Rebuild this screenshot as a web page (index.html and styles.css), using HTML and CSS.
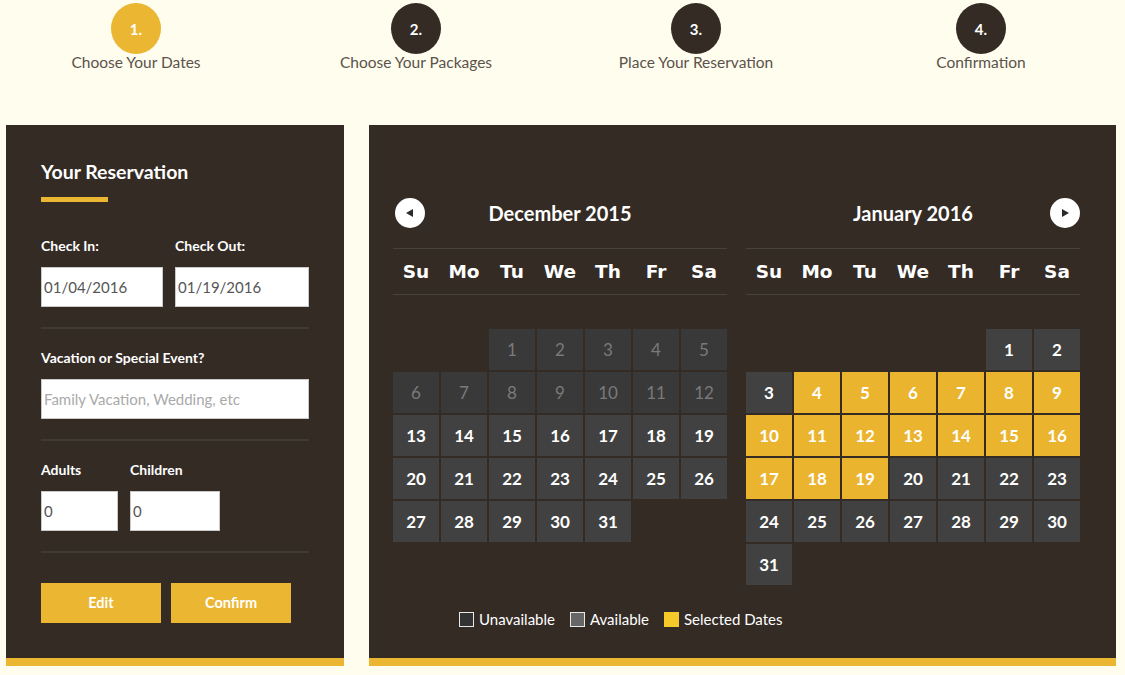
FILE: index.html
```html
<!DOCTYPE html>
<html>
<head>
<meta charset="utf-8">
<title>Reservation</title>
<link rel="stylesheet" href="styles.css">
</head>
<body>
<div class="steps">
  <div class="step active"><div class="num">1.</div><div class="label">Choose Your Dates</div></div>
  <div class="step"><div class="num">2.</div><div class="label">Choose Your Packages</div></div>
  <div class="step"><div class="num">3.</div><div class="label">Place Your Reservation</div></div>
  <div class="step"><div class="num">4.</div><div class="label">Confirmation</div></div>
</div>
<div class="main">
  <div class="panel side">
    <h2 class="title">Your Reservation</h2>
    <div class="bar"></div>
    <div class="row dates">
      <div class="field f-in"><label>Check In:</label><input type="text" value="01/04/2016"></div>
      <div class="field f-out"><label>Check Out:</label><input type="text" value="01/19/2016"></div>
    </div>
    <div class="sep"></div>
    <div class="field"><label>Vacation or Special Event?</label><input type="text" placeholder="Family Vacation, Wedding, etc"></div>
    <div class="sep"></div>
    <div class="row guests">
      <div class="field f-adults"><label>Adults</label><input type="text" value="0"></div>
      <div class="field f-children"><label>Children</label><input type="text" value="0"></div>
    </div>
    <div class="sep"></div>
    <div class="buttons">
      <button class="btn">Edit</button>
      <button class="btn">Confirm</button>
    </div>
  </div>
  <div class="panel cal">
    <div class="months">
      <div class="month">
        <div class="mhead">
          <span class="arrow"><svg width="30" height="30" viewBox="0 0 30 30"><path d="M11 15 L18 11 L18 19 Z" fill="#2b2b2b"/></svg></span>
          <span class="mtitle">December 2015</span>
          <span class="arrow-spacer"></span>
        </div>
        <div class="wdays"><span>Su</span><span>Mo</span><span>Tu</span><span>We</span><span>Th</span><span>Fr</span><span>Sa</span></div>
        <div class="grid">
          <span class="blank"></span><span class="blank"></span>
          <span class="un">1</span><span class="un">2</span><span class="un">3</span><span class="un">4</span><span class="un">5</span>
          <span class="un">6</span><span class="un">7</span><span class="un">8</span><span class="un">9</span><span class="un">10</span><span class="un">11</span><span class="un">12</span>
          <span>13</span><span>14</span><span>15</span><span>16</span><span>17</span><span>18</span><span>19</span>
          <span>20</span><span>21</span><span>22</span><span>23</span><span>24</span><span>25</span><span>26</span>
          <span>27</span><span>28</span><span>29</span><span>30</span><span>31</span>
        </div>
      </div>
      <div class="month">
        <div class="mhead">
          <span class="arrow-spacer"></span>
          <span class="mtitle">January 2016</span>
          <span class="arrow"><svg width="30" height="30" viewBox="0 0 30 30"><path d="M19 15 L12 11 L12 19 Z" fill="#2b2b2b"/></svg></span>
        </div>
        <div class="wdays"><span>Su</span><span>Mo</span><span>Tu</span><span>We</span><span>Th</span><span>Fr</span><span>Sa</span></div>
        <div class="grid">
          <span class="blank"></span><span class="blank"></span><span class="blank"></span><span class="blank"></span><span class="blank"></span>
          <span>1</span><span>2</span>
          <span>3</span><span class="sel">4</span><span class="sel">5</span><span class="sel">6</span><span class="sel">7</span><span class="sel">8</span><span class="sel">9</span>
          <span class="sel">10</span><span class="sel">11</span><span class="sel">12</span><span class="sel">13</span><span class="sel">14</span><span class="sel">15</span><span class="sel">16</span>
          <span class="sel">17</span><span class="sel">18</span><span class="sel">19</span><span>20</span><span>21</span><span>22</span><span>23</span>
          <span>24</span><span>25</span><span>26</span><span>27</span><span>28</span><span>29</span><span>30</span>
          <span>31</span>
        </div>
      </div>
    </div>
    <div class="legend">
      <span class="key"><i class="box b-un"></i>Unavailable</span>
      <span class="key"><i class="box b-av"></i>Available</span>
      <span class="key"><i class="box b-sel"></i>Selected Dates</span>
    </div>
  </div>
</div>
</body>
</html>
```
FILE: styles.css
```css
* { box-sizing: border-box; }
html, body { margin: 0; padding: 0; }
body {
  background: #fffdee;
  font-family: Lato, "Liberation Sans", sans-serif;
  width: 1125px;
  height: 675px;
  overflow: hidden;
}
.steps {
  display: grid;
  grid-template-columns: 280px 280px 285px 200px;
  padding-left: 36px;
  padding-top: 3px;
  height: 125px;
}
.step {
  width: 200px;
  display: flex;
  flex-direction: column;
  align-items: center;
}
.num {
  width: 50px;
  height: 51px;
  border-radius: 50%;
  background: #342b25;
  color: #fff;
  font-weight: 700;
  font-size: 15px;
  display: flex;
  align-items: center;
  justify-content: center;
}
.step.active .num { background: #ebb631; }
.label {
  margin-top: 0;
  font-size: 15.5px;
  line-height: 17px;
  color: #5b524b;
}
.main {
  display: flex;
  gap: 25px;
  padding-left: 6px;
}
.panel {
  background: #342b25;
  border-bottom: 8px solid #ebb631;
  height: 541px;
}
.side {
  width: 338px;
  padding: 35px 35px 0 35px;
  color: #fff;
}
.title {
  margin: 0;
  font-size: 19.5px;
  line-height: 24px;
  font-weight: 700;
}
.bar {
  margin-top: 13px;
  width: 67px;
  height: 5px;
  background: #ebb631;
}
.row { display: flex; }
.dates { margin-top: 35px; gap: 12px; }
.guests { gap: 12px; }
.field { display: flex; flex-direction: column; }
.field label {
  font-size: 14px;
  line-height: 18px;
  font-weight: 700;
  margin-bottom: 12px;
}
.field input {
  height: 40px;
  border: 1px solid #c9c9c9;
  background: #fff;
  font-family: Lato, "Liberation Sans", sans-serif;
  font-size: 15px;
  color: #555;
  padding: 0 2px;
  outline: none;
}
.field input::placeholder { color: #aaa; }
.f-in input { width: 122px; }
.f-out input { width: 134px; }
.f-adults input { width: 77px; }
.f-children input { width: 90px; }
.sep {
  height: 2px;
  background: #403a35;
  margin: 20px 0 20px;
}
.buttons {
  display: flex;
  gap: 10px;
  margin-top: 30px;
}
.btn {
  width: 120px;
  height: 40px;
  border: 0;
  background: #ebb631;
  color: #fff;
  font-family: Lato, "Liberation Sans", sans-serif;
  font-size: 14.5px;
  font-weight: 700;
  padding: 0 0 2px;
}
.cal {
  width: 747px;
  padding: 73px 36px 0 24px;
}
.months {
  display: flex;
  gap: 19px;
  align-items: flex-start;
}
.month { width: 334px; }
.mhead {
  display: flex;
  align-items: center;
  height: 30px;
  margin-bottom: 20px;
}
.arrow {
  width: 30px;
  height: 30px;
  border-radius: 50%;
  background: #fff;
  display: block;
}
.arrow svg { display: block; }
.month:first-child .arrow { margin-left: 2px; }
.arrow-spacer { width: 30px; }
.month:first-child .arrow-spacer { width: 32px; }
.mtitle {
  flex: 1;
  text-align: center;
  color: #fff;
  font-size: 20px;
  font-weight: 700;
}
.wdays {
  display: grid;
  grid-template-columns: repeat(7, 46px);
  column-gap: 2px;
  border-top: 1px solid #48423c;
  border-bottom: 1px solid #48423c;
  height: 47px;
  align-items: center;
  color: #fff;
  font-family: "DejaVu Sans", Verdana, sans-serif;
  font-weight: 700;
  font-size: 18.5px;
  text-align: center;
}
.grid {
  margin-top: 34px;
  display: grid;
  grid-template-columns: repeat(7, 46px);
  grid-auto-rows: 41px;
  gap: 2px;
}
.grid span {
  background: #414141;
  color: #fff;
  font-size: 17px;
  font-weight: 700;
  display: flex;
  align-items: center;
  justify-content: center;
}
.grid span.blank { background: transparent; }
.grid span.un { background: #393939; color: #7a7a7a; font-weight: 400; }
.grid span.sel { background: #eab42f; }
.legend {
  margin-top: 26px;
  padding-left: 66px;
  display: flex;
  gap: 15px;
  color: #fff;
  font-size: 15px;
  line-height: 16px;
}
.key { display: flex; align-items: center; }
.box {
  width: 15px;
  height: 15px;
  border: 1px solid #e8e8e8;
  margin-right: 5px;
  display: block;
}
.b-un { background: #333; }
.b-av { background: #666; }
.b-sel { background: #f6c92b; border-color: #f6c92b; }
```
